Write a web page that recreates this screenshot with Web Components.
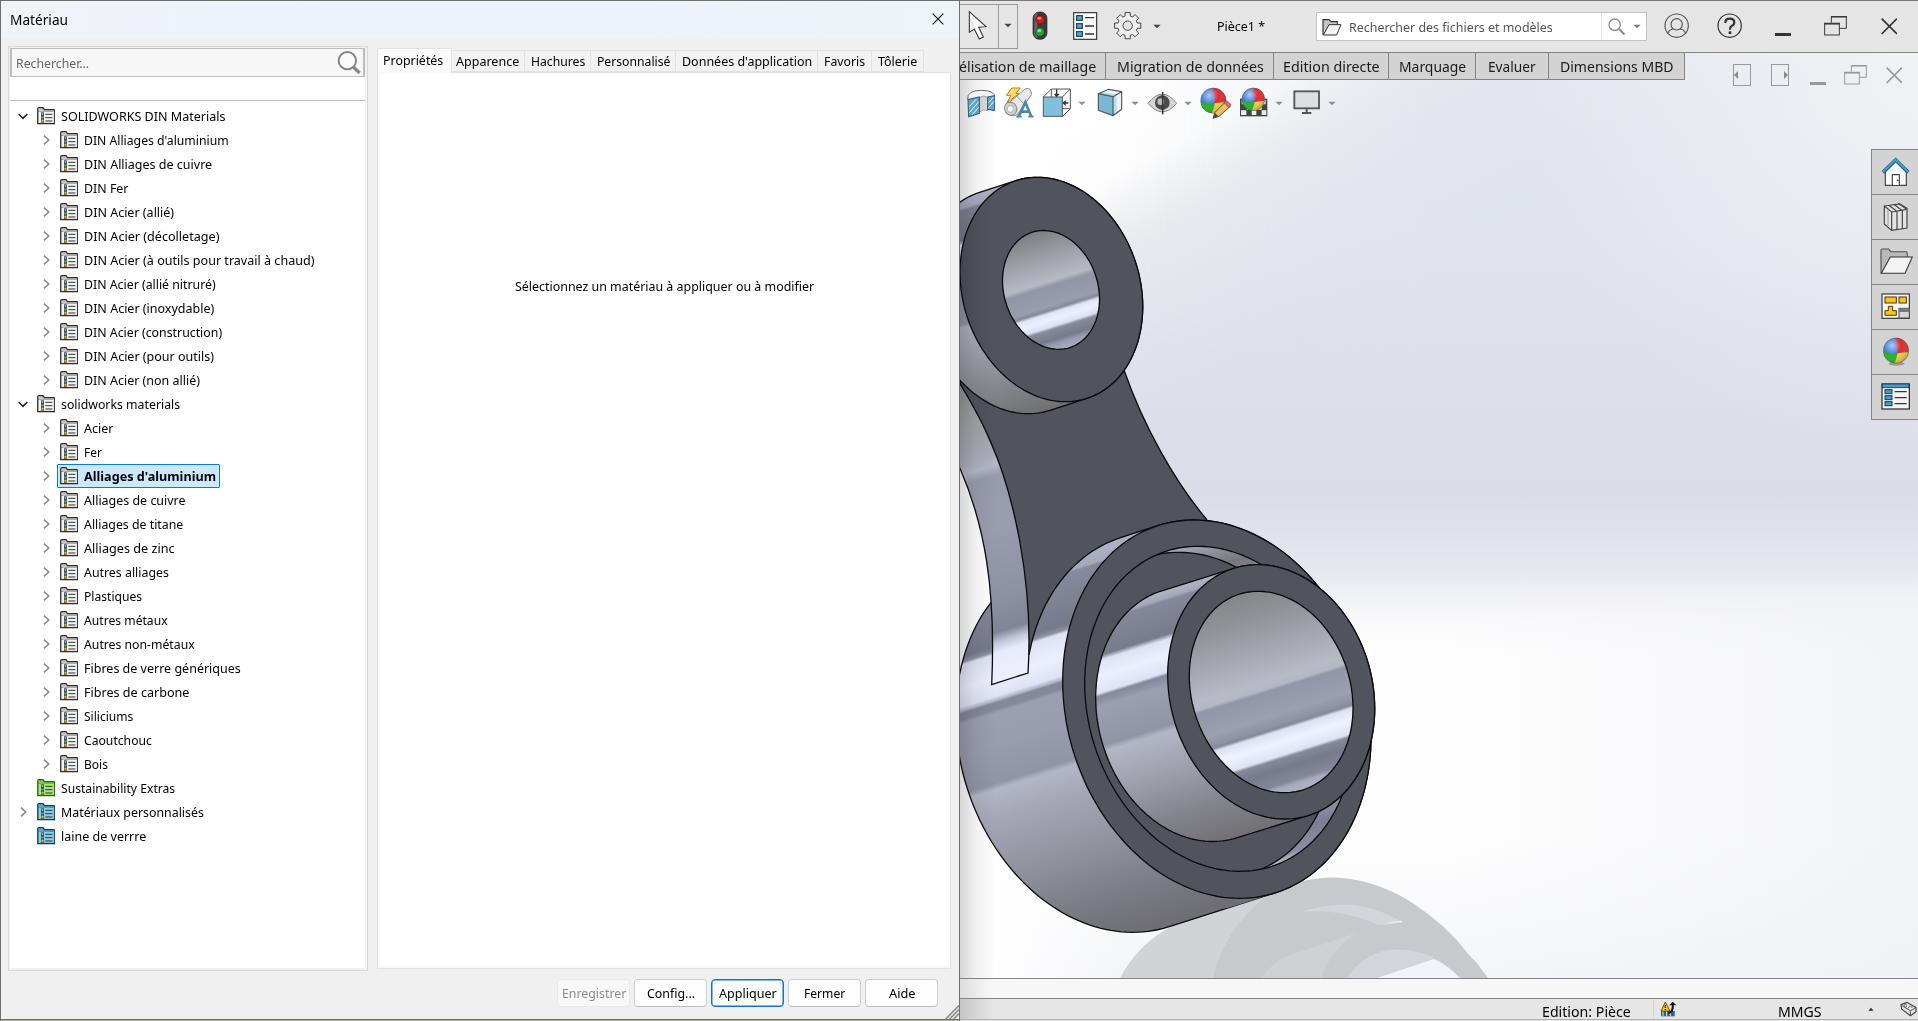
<!DOCTYPE html>
<html lang="fr">
<head>
<meta charset="utf-8">
<title>Matériau</title>
<style>
html,body{margin:0;padding:0}
body{width:1918px;height:1021px;overflow:hidden;font-family:"Noto Sans","Open Sans",sans-serif;font-size:12.5px;color:#000;background:#e5e5e5}
.desk{display:flex;width:1918px;height:1021px}
</style>
</head>
<body>
<div class="desk">
<material-dialog></material-dialog>
<cad-window></cad-window>
</div>
<script>
const NX = .3, NY = .954;

/* ---------- icons: drawn on a grid of three units per pixel ---------- */
const sphere = (cx, cy, r) => `
 <clipPath id="sc"><circle cx="${cx}" cy="${cy}" r="${r}"/></clipPath>
 <radialGradient id="sh" cx=".35" cy=".3" r=".8"><stop offset="0" stop-color="#fff" stop-opacity=".6"/><stop offset=".45" stop-color="#fff" stop-opacity="0"/><stop offset="1" stop-color="#000" stop-opacity=".3"/></radialGradient>
 <g clip-path="url(#sc)"><rect x="${cx-r}" y="${cy-r}" width="${2*r}" height="${2*r}" fill="#3f78d8"/>
 <path d="M${cx-3} ${cy-r}Q${cx+6} ${cy-r/2} ${cx+4} ${cy+8}L${cx+r} ${cy+4}V${cy-r}Z" fill="#e02a2e"/>
 <path d="M${cx-r} ${cy+3}Q${cx-10} ${cy+12} ${cx+4} ${cy+8}Q${cx+3} ${cy+r-10} ${cx-5} ${cy+r}H${cx-r}Z" fill="#1fb51f"/>
 <path d="M${cx+4} ${cy+8}L${cx+r} ${cy+4}V${cy+r}H${cx-5}Q${cx+4} ${cy+r/2} ${cx+4} ${cy+8}Z" fill="#f0cf45"/></g>
 <circle cx="${cx}" cy="${cy}" r="${r}" fill="url(#sh)" stroke="#555" stroke-width="1.5"/>`;
const folder = (a, b, line) => `<path d="M2 50V6Q2 2 6 2H18L22 8H50Q53 8 53 12V50Z" fill="${a}" stroke="${line}" stroke-width="3.4"/>
 <rect x="6" y="13" width="44" height="34" fill="${b}"/><path d="M2 14H50" stroke="${line}" stroke-width="2" opacity=".55"/>
 <rect x="12" y="16" width="9" height="31" fill="#444"/><circle cx="16.5" cy="21" r="2.6" fill="#ddd"/><circle cx="16.5" cy="31" r="3.6" fill="#39a8e0"/><circle cx="16.5" cy="41" r="3.6" fill="#f0b429"/>
 <path d="M25 22H46M25 32H46M25 42H46" stroke="#333" stroke-width="3"/>`;
const restore = (x, y, c) => `<g fill="none" stroke="${c}" stroke-width="3"><path d="M${x+22} ${y+20}V${y+2}H${x+67}V${y+37}H${x+47}"/><rect x="${x+2}" y="${y+23}" width="44" height="34"/></g><path d="M${x} ${y+23}H${x+48}M${x+21} ${y+2}H${x+69}" stroke="${c}" stroke-width="5"/>`;
const gear = (() => { let d = '';
  for (let i = 0; i < 8; i++) for (const [o, r] of [[-.26,30],[-.2,40],[.2,40],[.26,30]]) {
    const a = i*Math.PI/4 + o; d += (d?'L':'M') + (534+r*Math.cos(a)).toFixed(1)+' '+(78+r*Math.sin(a)).toFixed(1); }
  return d + 'Z'; })();
const ICONS = {
 down: ['0 0 42 30', '<path d="M8 9L21 22L34 9" fill="none" stroke="#1c1c1c" stroke-width="4.5"/>'],
 right:['0 0 42 36', '<path d="M15 5L29 18L15 31" fill="none" stroke="#848484" stroke-width="4.5"/>'],
 none: ['0 0 42 30', ''],
 gray: ['0 0 55 52', folder('#c9c9c9','#f2f2f2','#2b2b2b')],
 green:['0 0 55 52', folder('#7ec850','#a2ec6c','#1f6a10')],
 blue: ['0 0 55 52', folder('#5aa9d0','#86cdea','#0f3d5c')],
 find: ['1012 152 72 70','<circle cx="1043" cy="181" r="26" fill="#fafafa" stroke="#858585" stroke-width="6"/><path d="M1061 200L1080 218" stroke="#858585" stroke-width="10"/>'],
 dlgx: ['0 0 42 42','<path d="M5 5L37 37M37 5L5 37" stroke="#111" stroke-width="3.4"/>'],
 cursor:['54 30 60 92','<path d="M58 35L58 97L73 87L88 117L100 111L86 82L108 80Z" fill="#fff" stroke="#333" stroke-width="3.2"/><path d="M61 42V92L73 82Z" fill="#e8e8e8"/>'],
 arrow:['0 0 24 15','<path d="M1 2H23L12 13Z" fill="#444"/>'],
 arrowm:['0 0 24 15','<path d="M1 2H23L12 13Z" fill="#7c7c7c"/>'],
 arrowg:['0 0 24 15','<path d="M1 2H23L12 13Z" fill="#8c8e93"/>'],
 light:['246 34 48 88','<rect x="249" y="37" width="42" height="82" rx="19" fill="#3a3a3a" stroke="#222" stroke-width="2"/><path d="M253 52Q253 41 262 40V116Q253 112 253 104Z" fill="#666"/><circle cx="270" cy="60" r="13" fill="#d01c14" stroke="#5a1010" stroke-width="2"/><circle cx="270" cy="97" r="13" fill="#2f9e3c" stroke="#104a18" stroke-width="2"/><ellipse cx="268" cy="56" rx="6" ry="4" fill="#ff8a78"/><ellipse cx="268" cy="93" rx="6" ry="4" fill="#8fe394"/>'],
 list: ['369 36 74 85','<rect x="371" y="38" width="69" height="80" fill="#fff" stroke="#333" stroke-width="3.5"/><g fill="#5aa9cf" stroke="#123f5c" stroke-width="3.5"><rect x="380" y="47" width="17" height="14"/><rect x="380" y="71" width="17" height="14"/><rect x="380" y="95" width="17" height="14"/></g><path d="M405 53H432M405 78H432M405 102H432" stroke="#333" stroke-width="4"/>'],
 gear: ['490 34 88 88',`<path d="${gear}" fill="#efefef" stroke="#444" stroke-width="3" stroke-linejoin="round"/><circle cx="534" cy="78" r="14" fill="#e5e5e5" stroke="#444" stroke-width="3"/>`],
 open: ['1117 52 60 54','<path d="M1120 103V57H1138L1144 63H1163V73" fill="#c4c4c4" stroke="#333" stroke-width="3.5"/><path d="M1121 103L1138 72H1174L1161 103Z" fill="#f4f4f4" stroke="#333" stroke-width="3"/>'],
 zoom: ['506 56 52 52','<circle cx="526" cy="76" r="17" fill="none" stroke="#8a8a8a" stroke-width="4"/><path d="M539 89L555 105" stroke="#8a8a8a" stroke-width="6"/>'],
 user: ['673 40 76 76','<circle cx="711" cy="78" r="35" fill="none" stroke="#555" stroke-width="3.4"/><circle cx="711" cy="74" r="17" fill="none" stroke="#555" stroke-width="3.4"/><path d="M684 101Q690 88 701 88M738 101Q732 88 721 88" fill="none" stroke="#555" stroke-width="3.4"/>'],
 help: ['832 40 76 76','<circle cx="870" cy="78" r="35" fill="none" stroke="#333" stroke-width="3.6"/><path d="M857 70Q857 57 870 57Q884 57 884 68Q884 76 875 80Q871 82 871 90" fill="none" stroke="#333" stroke-width="6.5"/><rect x="867" y="95" width="8" height="8" fill="#333"/>'],
 min:  ['0 0 48 9','<rect width="48" height="9" fill="#333"/>'],
 ming: ['0 0 48 9','<rect width="48" height="9" fill="#98999c"/>'],
 rest: ['0 0 70 60', restore(0,0,'#3a3a3a')],
 restg:['0 0 70 60', restore(0,0,'#98999c')],
 close:['0 0 50 50','<path d="M2 2L48 48M48 2L2 48" stroke="#333" stroke-width="5"/>'],
 closeg:['0 0 50 50','<path d="M2 2L48 48M48 2L2 48" stroke="#98999c" stroke-width="5"/>'],
 pleft:['0 0 54 66','<rect x="1.5" y="1.5" width="51" height="63" fill="none" stroke="#98999c" stroke-width="3"/><path d="M15 21V45L3 33Z" fill="#88898c"/>'],
 pright:['0 0 54 66','<rect x="1.5" y="1.5" width="51" height="63" fill="none" stroke="#98999c" stroke-width="3"/><path d="M39 21V45L51 33Z" fill="#88898c"/>'],
 section:['50 264 86 90','<path d="M52 297Q50 271 93 271Q136 271 134 295L112 303Q104 306 88 303L55 300Z" fill="#f2f2f2" stroke="#666" stroke-width="3"/><path d="M88 292Q100 284 112 292V332Q98 326 88 336Z" fill="#d2d2d2" stroke="#888" stroke-width="2"/><path d="M53 299L87 291V340L55 350ZM112 291L133 287V332L112 328Z" fill="#5fa8c9" stroke="#3a5f78" stroke-width="3.4"/><path d="M57 320L78 297M57 338L85 306M66 344L85 322M115 308L130 291M115 323L131 304" stroke="#e6f4fa" stroke-width="3"/>'],
 annot:['160 262 94 94','<path d="M168 318L226 268Q240 262 244 276L246 284L202 346Q180 352 168 338Z" fill="#e9e9e9" stroke="#888" stroke-width="3"/><path d="M202 290L222 312" stroke="#999" stroke-width="3"/><ellipse cx="183" cy="327" rx="18" ry="20" fill="#d0d0d0" stroke="#888" stroke-width="3" transform="rotate(-30 183 327)"/><ellipse cx="182" cy="328" rx="9" ry="10" fill="#fff" stroke="#999" stroke-width="2"/><path d="M187 265H212L198 281H209L172 309L184 287H170Z" fill="#ffe16a" stroke="#c9772a" stroke-width="3"/><path d="M207 351L227 308L245 351M214 336H238" fill="none" stroke="#4a87a8" stroke-width="8"/><path d="M200 351H216M236 351H252" stroke="#4a87a8" stroke-width="5"/>'],
 orient:['277 264 88 90','<g fill="none" stroke="#555" stroke-width="3"><path d="M281 291L305 267H362V326L338 350M338 291L362 267M305 267V290M338 326H362"/></g><rect x="281" y="291" width="57" height="58" fill="#7fc0dc" stroke="#555" stroke-width="3"/><path d="M321 268V284M356 309H345" stroke="#333" stroke-width="4"/><path d="M312 281H330L321 292ZM348 300V318L338 309Z" fill="#333"/>'],
 cube: ['441 264 78 86','<path d="M445 281L476 268L515 275L489 290Z" fill="#f2f8fb"/><path d="M445 281L489 290V347L445 331Z" fill="#79b9d6"/><path d="M489 290L515 275V328L489 347Z" fill="#eef2f4"/><path d="M462 276L500 283V341L489 347V290L445 281Z" fill="#a9d8ea" opacity=".8"/><path d="M445 281L476 268L515 275V328L489 347L445 331ZM445 281L489 290L515 275M489 290V347" fill="none" stroke="#555" stroke-width="3.5" stroke-linejoin="round"/>'],
 eye:  ['592 272 92 72','<path d="M595 309Q638 254 681 309Q638 360 595 309Z" fill="#d4d4d4" stroke="#888" stroke-width="3"/><circle cx="638" cy="307" r="22" fill="#4a4a4c"/><circle cx="633" cy="304" r="10" fill="#bfc0c2"/><path d="M639 275V342" stroke="#333" stroke-width="4.5"/>'],
 paint:['751 262 94 96', sphere(791,303,38)+'<path d="M790 356L796 338L828 306L842 320L808 350Z" fill="#f0c060" stroke="#6a4a2a" stroke-width="3"/><path d="M824 310L832 303L844 315L837 324Z" fill="#e06a6a" stroke="#555" stroke-width="2"/><path d="M790 356L796 340L806 350Z" fill="#444"/>'],
 scene:['868 262 88 90','<path d="M871 297H953V350H871Z" fill="#444"/><path d="M876 301H892V314H876ZM930 301H948V314H930ZM892 316H908V330H892ZM918 318H936V330H918ZM874 332H890V346H874ZM906 332H920V346H906ZM936 332H950V346H936Z" fill="#eee"/>'+sphere(911,299,34)],
 mon:  ['1030 271 82 72','<rect x="1034" y="275" width="74" height="51" fill="#dcdee2" stroke="#555" stroke-width="5.5"/><path d="M1071 328V338M1057 340H1085" stroke="#555" stroke-width="6"/>'],
 home: ['130 48 88 90','<path d="M143 90V133H206V90L174 60Z" fill="#fafafa" stroke="#444" stroke-width="3.5"/><path d="M164 132V101H185V132" fill="#fff" stroke="#444" stroke-width="3.5"/><circle cx="180" cy="118" r="2.5" fill="#444"/><path d="M136 94L174 57L212 94" fill="none" stroke="#1c5a80" stroke-width="11"/><path d="M136 93L174 56L212 93" fill="none" stroke="#4a9cc8" stroke-width="6"/>'],
 lib:  ['135 184 76 88','<path d="M139 196L186 190L207 203V262L161 269L139 250Z" fill="#e4e4e4" stroke="#444" stroke-width="3.5"/><path d="M139 196L161 214L207 206M161 214V269M177 211V266M193 208V264M152 194L175 210M167 190L190 208M180 188L204 204" fill="none" stroke="#444" stroke-width="3.5"/><path d="M150 206V257" stroke="#999" stroke-width="3"/>'],
 fold: ['124 325 100 80','<path d="M127 401V331Q127 328 131 328H150L156 336H204Q206 337 206 352" fill="#b9b9b9" stroke="#4c4c4c" stroke-width="3.2"/><path d="M128 401L155 352H221L199 401Z" fill="#f4f4f4" stroke="#333" stroke-width="3.2"/>'],
 pal:  ['130 460 88 80','<rect x="133" y="463" width="82" height="73" fill="#f7f7f7" stroke="#333" stroke-width="3.5"/><g fill="#fcc419" stroke="#4a3500" stroke-width="3"><rect x="142" y="472" width="34" height="18"/><rect x="184" y="472" width="22" height="18"/><path d="M142 527V513H152V500H165V513H176V527Z"/></g><rect x="184" y="506" width="31" height="29" fill="#d6d6d6" stroke="#444" stroke-width="3"/><rect x="184" y="506" width="31" height="11" fill="#777"/>'],
 ball: ['132 588 84 88','<ellipse cx="176" cy="668" rx="24" ry="6" fill="#999"/>'+sphere(174,629,38)],
 prop: ['130 728 88 82','<rect x="133" y="731" width="82" height="75" fill="#f4f4f4" stroke="#222" stroke-width="3.5"/><rect x="134" y="731" width="80" height="11" fill="#4a9cc4" stroke="#123a54" stroke-width="2.5"/><g fill="#4a9cc4" stroke="#123a54" stroke-width="3"><rect x="142" y="748" width="21" height="12"/><rect x="142" y="766" width="21" height="12"/><rect x="142" y="784" width="21" height="12"/></g><path d="M171 754H207M171 772H207M171 790H207" stroke="#333" stroke-width="3.5"/>'],
 warn: ['627 126 51 48','<path d="M630 156H671V172H630Z" fill="#2d6284"/><path d="M636 156V172M647 156V172M658 156V172" stroke="#dfe8ee" stroke-width="3"/><path d="M630 156L643 129L657 156Z" fill="#ffc61a" stroke="#7a4a00" stroke-width="3"/><path d="M643 138V147M643 150V153" stroke="#222" stroke-width="3.5"/><path d="M652 162Q668 158 665 136" fill="none" stroke="#111" stroke-width="6"/><path d="M655 139L665 128L676 139Z" fill="#111"/>'],
 up:   ['0 0 18 12','<path d="M1 11H17L9 2Z" fill="#333"/>'],
 tag:  ['1351 126 52 48','<path d="M1354 137L1372 130L1399 146V158L1382 170L1356 150Z" fill="#e8e8e8" stroke="#444" stroke-width="3.5"/><path d="M1355 139L1382 155L1398 147M1382 155V168" fill="none" stroke="#555" stroke-width="3"/><circle cx="1367" cy="140" r="4" fill="none" stroke="#555" stroke-width="2.5"/><path d="M1374 148L1382 141L1388 147" fill="none" stroke="#555" stroke-width="2.5"/>'],
 grip: ['0 0 42 42','<path d="M2 42L42 2M14 42L42 14M26 42L42 26" stroke="#8f8f8f" stroke-width="5"/>']
};

class SwIcon extends HTMLElement {
  constructor(){ super(); this.attachShadow({mode:'open'}); }
  connectedCallback(){
    const [vb, body] = ICONS[this.getAttribute('name')];
    const [, , w, h] = vb.split(' ').map(Number);
    this.shadowRoot.innerHTML = `<style>:host{display:block;flex:none;width:${w/3}px;height:${h/3}px}svg{display:block;width:100%;height:100%}</style><svg viewBox="${vb}">${body}</svg>`;
  }
}
customElements.define('sw-icon', SwIcon);

/* Text set to a fixed advance width, so that the labels keep their measure. */
class FitText extends HTMLElement {
  constructor(){ super(); this.attachShadow({mode:'open'});
    this.shadowRoot.innerHTML = `<style>:host{display:block;flex:none;white-space:pre}span{display:inline-block;transform-origin:0 50%}</style><span><slot></slot></span>`; }
  connectedCallback(){
    const w = +this.getAttribute('w'), s = this.shadowRoot.querySelector('span');
    this.style.width = w + 'px';
    s.style.transform = `scaleX(${((w + .6) / s.offsetWidth).toFixed(4)})`;
  }
}
customElements.define('fit-text', FitText);

/* ---------- material tree ---------- */
class TreeRow extends HTMLElement {
  constructor(){ super(); this.attachShadow({mode:'open'}); }
  connectedCallback(){
    const a = n => this.getAttribute(n);
    this.shadowRoot.innerHTML = `<style>
:host{display:flex;flex:none;align-items:center;height:24px;padding-left:${a('level')==='1'?29:6}px}
.l{display:flex;align-items:center;gap:6px;height:22px;margin-left:4px;padding:0 4px 0 2px;border:1px solid transparent;border-radius:1px}
.l.sel{background:#cce8ff;border-color:#0a7ad6;font-weight:700}
</style><sw-icon name="${a('mark')}"></sw-icon><div class="l ${this.hasAttribute('selected')?'sel':''}"><sw-icon name="${a('kind')}"></sw-icon><fit-text w="${a('w')}"></fit-text></div>`;
    const f = this.shadowRoot.querySelector('fit-text'); f.textContent = this.dataset.label; f.connectedCallback();
  }
}
customElements.define('tree-row', TreeRow);
const TREE = [
 [0,'down','gray',164,'SOLIDWORKS DIN Materials'],
 [1,0,0,144,"DIN Alliages d'aluminium"],[1,0,0,127.5,'DIN Alliages de cuivre'],[1,0,0,44,'DIN Fer'],[1,0,0,89.5,'DIN Acier (allié)'],[1,0,0,134.5,'DIN Acier (décolletage)'],[1,0,0,229.5,'DIN Acier (à outils pour travail à chaud)'],[1,0,0,131.5,'DIN Acier (allié nitruré)'],[1,0,0,129.5,'DIN Acier (inoxydable)'],[1,0,0,137.5,'DIN Acier (construction)'],[1,0,0,129.5,'DIN Acier (pour outils)'],[1,0,0,115,'DIN Acier (non allié)'],
 [0,'down','gray',118.5,'solidworks materials'],
 [1,0,0,28.5,'Acier'],[1,0,0,17.5,'Fer'],[1,0,0,131,"Alliages d'aluminium",1],[1,0,0,101,'Alliages de cuivre'],[1,0,0,99,'Alliages de titane'],[1,0,0,89.5,'Alliages de zinc'],[1,0,0,84.5,'Autres alliages'],[1,0,0,57.5,'Plastiques'],[1,0,0,83,'Autres métaux'],[1,0,0,110,'Autres non-métaux'],[1,0,0,156.5,'Fibres de verre génériques'],[1,0,0,105,'Fibres de carbone'],[1,0,0,48.5,'Siliciums'],[1,0,0,67.5,'Caoutchouc'],[1,0,0,23.5,'Bois'],
 [0,'none','green',114,'Sustainability Extras'],[0,'right','blue',142,'Matériaux personnalisés'],[0,'none','blue',84.5,'laine de verrre']
];
class MaterialTree extends HTMLElement {
  constructor(){ super(); this.attachShadow({mode:'open'}); }
  connectedCallback(){
    this.shadowRoot.innerHTML = `<style>
:host{display:flex;flex-direction:column;box-sizing:border-box;width:360px;height:925px;border:1px solid #d9d9d9;padding:1px 2px 2px 1px;background:#f0f0f0}
.in{flex:1;background:#fff;display:flex;flex-direction:column}
.s{display:flex;flex:none;align-items:center;justify-content:space-between;box-sizing:border-box;height:29px;border:1px solid #bdbdbd;border-width:1px 2px 1px 2px;background:#f7f7f7;color:#666;padding:0 2px 0 4px}
.s fit-text{margin-top:2px}
.r{flex:none;height:23px;border-bottom:1px solid #bdbdbd;margin-bottom:3px}
</style><div class="in"><div class="s"><fit-text w="73">Rechercher...</fit-text><sw-icon name="find"></sw-icon></div><div class="r"></div>${
 TREE.map(([l,m,k,w,t,s])=>`<tree-row level="${l}" mark="${m||'right'}" kind="${k||'gray'}" w="${w}" ${s?'selected':''} data-label="${t}"></tree-row>`).join('')}</div>`;
  }
}
customElements.define('material-tree', MaterialTree);

class PropertyTabs extends HTMLElement {
  constructor(){ super(); this.attachShadow({mode:'open'}); }
  connectedCallback(){
    const T = [['Propriétés',75,60,6],['Apparence',73,62.5,4],['Hachures',66,54,6],['Personnalisé',85,72.5,6],["Données d'application",142,129.2,6],['Favoris',54,40.7,6],['Tôlerie',52,38.3,6]];
    this.shadowRoot.innerHTML = `<style>
:host{display:flex;flex-direction:column;width:574px;height:921px}
.t{display:flex;align-items:flex-end;height:24px;position:relative;z-index:1}
.t div{box-sizing:border-box;height:22px;display:flex;align-items:center;border:1px solid #e2e2e2;border-left:0;background:#f2f2f2;padding-top:1px}
.t div.on{height:25px;border-left:1px solid #e2e2e2;border-bottom:0;background:#fafafa;margin-bottom:-1px;padding:0 0 2px}
.p{flex:1;box-sizing:border-box;border:1px solid #e2e2e2;background:#fff;box-shadow:inset 2px 0 #f9f9f9,inset 0 -2px #f9f9f9,inset 0 1px #f9f9f9;display:flex;flex-direction:column;align-items:center;padding-top:205px}
</style><div class="t">${T.map((t,i)=>`<div class="${i?'':'on'}" style="width:${t[1]}px;padding-left:${t[3]-(i?0:1)}px"><fit-text w="${t[2]}">${t[0]}</fit-text></div>`).join('')}</div>
<div class="p"><fit-text w="298.5">Sélectionnez un matériau à appliquer ou à modifier</fit-text></div>`;
  }
}
customElements.define('property-tabs', PropertyTabs);

class DialogButton extends HTMLElement {
  constructor(){ super(); this.attachShadow({mode:'open'});
    this.shadowRoot.innerHTML = `<style>
:host{display:flex;align-items:center;justify-content:center;box-sizing:border-box;width:73px;height:28px;border:1px solid #cfcfcf;border-bottom-color:#bdbdbd;border-radius:4px;background:#fdfdfd}
:host([off]){color:#8c8c8c;background:#f8f8f8;border-color:#e9e9e9}
:host([primary]){border-color:#0b74cf;box-shadow:inset 0 0 0 .5px #0b74cf}
</style><slot></slot>`; }
}
customElements.define('dialog-button', DialogButton);

class MaterialDialog extends HTMLElement {
  constructor(){ super(); this.attachShadow({mode:'open'}); }
  connectedCallback(){
    this.shadowRoot.innerHTML = `<style>
:host{display:flex;flex-direction:column;box-sizing:border-box;width:960px;height:1021px;border:1px solid #6f6f6f;border-bottom:0;background:#f0f0f0;flex:none}
header,.m,footer,.g,.e,.k{flex:none}
header{display:flex;align-items:center;justify-content:space-between;height:37px;padding:0 14px 2px 9px;box-sizing:border-box;background:linear-gradient(90deg,#eff4f8,#eef2fb 35%,#eef2fb 65%,#ecf5f7);font-size:14.6px}
header sw-icon{margin-top:1px}
.m{display:flex;gap:9px;padding:8px 0 0 7px;height:925px}
property-tabs{margin-top:2px}
footer{display:flex;gap:4px;padding:8px 0 0 556px;height:28px}
.g{display:flex;justify-content:flex-end;align-items:flex-end;height:12px}
.g sw-icon{margin-top:-4px}
.e{height:1px;background:#6f6f6f}.k{height:1px;background:#a9b38c}
</style><header><fit-text w="57.5">Matériau</fit-text><sw-icon name="dlgx"></sw-icon></header>
<div class="m"><material-tree></material-tree><property-tabs></property-tabs></div>
<footer><dialog-button off><fit-text w="63.5">Enregistrer</fit-text></dialog-button><dialog-button><fit-text w="47">Config...</fit-text></dialog-button><dialog-button primary><fit-text w="56.7">Appliquer</fit-text></dialog-button><dialog-button><fit-text w="41">Fermer</fit-text></dialog-button><dialog-button><fit-text w="26">Aide</fit-text></dialog-button></footer>
<div class="g"><sw-icon name="grip"></sw-icon></div><div class="e"></div><div class="k"></div>`;
  }
}
customElements.define('material-dialog', MaterialDialog);

/* ---------- 3D part ---------- */
/* Tilted ellipse from its bounding box and the abscissas of its top and bottom points. */
function ell(l, r, t, b, xt, xb){
  const hw=(r-l)/2, hh=(b-t)/2, sxx=hw*hw, syy=hh*hh, sxy=(xb-xt)/2*hh;
  const m=(sxx+syy)/2, q=Math.hypot((sxx-syy)/2, sxy);
  return {cx:(l+r)/2, cy:(t+b)/2, a:Math.sqrt(m+q), b:Math.sqrt(m-q), th:.5*Math.atan2(2*sxy, sxx-syy)};
}
const pt = (e,t,dx=0,dy=0) => [e.cx+dx+e.a*Math.cos(t)*Math.cos(e.th)-e.b*Math.sin(t)*Math.sin(e.th), e.cy+dy+e.a*Math.cos(t)*Math.sin(e.th)+e.b*Math.sin(t)*Math.cos(e.th)];
function poly(ps){ return 'M'+ps.map(p=>p[0].toFixed(1)+' '+p[1].toFixed(1)).join('L')+'Z'; }
function ring(e,dx,dy){ const a=[]; for(let i=0;i<180;i++) a.push(pt(e,i*Math.PI/90,dx,dy)); return poly(a); }
/* Outline of an ellipse swept along (dx,dy). */
function sweep(e,dx,dy){
  const du=dx*Math.cos(e.th)+dy*Math.sin(e.th), dv=-dx*Math.sin(e.th)+dy*Math.cos(e.th);
  const t0=Math.atan2(-du*e.b, dv*e.a);
  const mid=pt(e,t0+Math.PI/2), s=((mid[0]-e.cx)*dx+(mid[1]-e.cy)*dy)>0?1:-1, a=[];
  for(let i=0;i<=90;i++) a.push(pt(e,t0+s*i*Math.PI/90,dx,dy));
  for(let i=90;i<=180;i++) a.push(pt(e,t0+s*i*Math.PI/90));
  return poly(a);
}
function grad(id, stops){
  const s0=stops[0][0], s1=stops[stops.length-1][0];
  return `<linearGradient id="${id}" gradientUnits="userSpaceOnUse" x1="${s0*NX}" y1="${s0*NY}" x2="${s1*NX}" y2="${s1*NY}">${stops.map(([s,c])=>`<stop offset="${((s-s0)/(s1-s0)).toFixed(4)}" stop-color="${c}"/>`).join('')}</linearGradient>`;
}
class PartView extends HTMLElement {
  constructor(){ super(); this.attachShadow({mode:'open'}); }
  connectedCallback(){
    const boss=ell(960,1142.7,177.3,401.7,1037,1065), hole=ell(1002.5,1099.5,230.5,349.3,1044.3,1059.3);
    const big=ell(1062.7,1371,520,898.3,1196.5,1242), groove=ell(1084.7,1353,546.3,871.3,1198,1240);
    const tube=ell(1167.7,1374.7,564.7,819,1258,1285), bore=ell(1189.3,1353,591.3,792.7,1258,1284);
    const D='#51535d', K='stroke="#0a0a0c" stroke-width="1.3"';
    this.shadowRoot.innerHTML = `<style>:host{display:block}svg{display:block;width:958px;height:925px}</style>
<svg viewBox="960 53 958 925"><defs>
<linearGradient id="bg" gradientUnits="userSpaceOnUse" x1="0" y1="53" x2="0" y2="978"><stop offset="0" stop-color="#e3e7ee"/><stop offset=".1" stop-color="#e0e4ec"/><stop offset=".36" stop-color="#dddfea"/><stop offset=".48" stop-color="#dadde7"/><stop offset=".56" stop-color="#e7e8ef"/><stop offset=".61" stop-color="#f9f9fb"/><stop offset=".65" stop-color="#fefefe"/><stop offset=".85" stop-color="#fefefe"/><stop offset="1" stop-color="#f4f5f9"/></linearGradient>
<linearGradient id="wh" gradientUnits="userSpaceOnUse" x1="1080" y1="110" x2="1215" y2="370"><stop offset="0" stop-color="#fff"/><stop offset=".25" stop-color="#fdfdfd"/><stop offset=".5" stop-color="#f0f0f1" stop-opacity=".55"/><stop offset="1" stop-color="#eee" stop-opacity="0"/></linearGradient>
<linearGradient id="tp" gradientUnits="userSpaceOnUse" x1="1120" y1="0" x2="1420" y2="0"><stop offset="0" stop-color="#e2e6ed" stop-opacity="0"/><stop offset="1" stop-color="#e1e5ed" stop-opacity=".85"/></linearGradient>
<linearGradient id="tf" gradientUnits="userSpaceOnUse" x1="0" y1="53" x2="0" y2="353"><stop offset="0" stop-color="#fff"/><stop offset=".6" stop-color="#fff"/><stop offset="1" stop-color="#000"/></linearGradient>
<mask id="tm" maskUnits="userSpaceOnUse" x="1120" y="53" width="798" height="300"><rect x="1120" y="53" width="798" height="300" fill="url(#tf)"/></mask>
<linearGradient id="wl" gradientUnits="userSpaceOnUse" x1="990" y1="0" x2="1120" y2="0"><stop offset="0" stop-color="#fff"/><stop offset="1" stop-color="#fff" stop-opacity="0"/></linearGradient>
<radialGradient id="rt" gradientUnits="userSpaceOnUse" cx="1918" cy="60" r="400"><stop offset="0" stop-color="#f3f4f7" stop-opacity=".9"/><stop offset="1" stop-color="#f3f4f7" stop-opacity="0"/></radialGradient>
<linearGradient id="rb" gradientUnits="userSpaceOnUse" x1="1450" y1="0" x2="1918" y2="0"><stop offset="0" stop-color="#f0f1f6" stop-opacity="0"/><stop offset="1" stop-color="#f0f1f6" stop-opacity=".8"/></linearGradient>
<linearGradient id="sd" gradientUnits="userSpaceOnUse" x1="960" y1="0" x2="996" y2="0"><stop offset="0" stop-color="#000" stop-opacity=".16"/><stop offset=".4" stop-color="#000" stop-opacity=".06"/><stop offset="1" stop-color="#000" stop-opacity="0"/></linearGradient>
${grad('gBig',[[840,'#b7bbce'],[865,'#a4a8ba'],[867,'#878a9c'],[915,'#777a8b'],[920,'#8d90a2'],[923,'#dfe2f2'],[945,'#eceffe'],[963,'#dfe2f4'],[967,'#b0b3c5'],[969,'#85889a'],[975,'#85889a'],[979,'#9c9fb1'],[1010,'#999cae'],[1046,'#9194a5'],[1052,'#b3b6c6'],[1080,'#a5a7b6'],[1130,'#92949f'],[1190,'#7a7c84'],[1228,'#6f6e74']])}
${grad('gTube',[[908,'#b7bbce'],[920,'#a4a8ba'],[923,'#85889a'],[955,'#787b8c'],[960,'#dfe2f2'],[975,'#eceffe'],[991,'#dfe2f4'],[994,'#85889a'],[999,'#8f92a4'],[1004,'#9c9fb1'],[1042,'#9194a5'],[1048,'#b3b6c4'],[1080,'#a2a4b0'],[1130,'#84858c'],[1168,'#727176']])}
${grad('gBore',[[941,'#86878b'],[965,'#919297'],[1030,'#b8bac6'],[1037,'#b4b7c4'],[1040,'#9396a8'],[1065,'#9c9fb0'],[1075,'#8e91a2'],[1078,'#85889a'],[1081,'#dde0f0'],[1092,'#eff2ff'],[1105,'#dfe2f2'],[1108,'#868999'],[1118,'#777a8a'],[1132,'#84879a'],[1136,'#a6aabd'],[1148,'#b5b9cc']])}
${grad('gHole',[[533,'#7f8083'],[555,'#9a9ba1'],[583,'#b7b9c6'],[588,'#9295a6'],[607,'#9a9dae'],[611,'#85889a'],[614,'#e0e3f3'],[620,'#eceffe'],[627,'#dde0f0'],[630,'#878a9b'],[640,'#777a8a'],[645,'#9a9db0'],[655,'#b0b4c6']])}
${grad('gBoss',[[470,'#b7bbce'],[487,'#a6aabd'],[490,'#7f8294'],[518,'#777a8b'],[523,'#e4e7f5'],[545,'#e4e7f5'],[550,'#8e91a2'],[598,'#9194a5'],[602,'#b0b2be'],[640,'#999aa3'],[680,'#7f8084'],[705,'#707073']])}
${grad('gRib',[[650,'#8f9093'],[700,'#a3a4aa'],[728,'#a9abb6'],[742,'#b5b8c6'],[752,'#989bad'],[800,'#9a9db0'],[870,'#8e91a4'],[902,'#818496'],[912,'#c3c6d8'],[922,'#e8ebfa'],[960,'#eff1fd']])}
${grad('gGr',[[870,'#b0b3c4'],[905,'#77777b'],[925,'#8f9095'],[960,'#b0b2bb'],[1100,'#dfe2f2'],[1180,'#7c7f92'],[1200,'#8b8ea2'],[1206,'#b0b4c6'],[1225,'#b7bbce']])}
<clipPath id="cg"><path d="${ring(groove,0,0)}"/></clipPath>
<clipPath id="ca"><rect x="1000" y="500" width="200" height="155"/></clipPath>
</defs>
<rect x="960" y="53" width="958" height="925" fill="url(#bg)"/><rect x="960" y="53" width="958" height="560" fill="url(#wh)"/><rect x="1120" y="53" width="798" height="300" fill="url(#tp)" opacity=".7" mask="url(#tm)"/><rect x="960" y="53" width="160" height="925" fill="url(#wl)"/><rect x="1400" y="53" width="518" height="500" fill="url(#rt)"/><rect x="1450" y="600" width="468" height="378" fill="url(#rb)"/>
<g><path d="M1120 978Q1138 944 1172 926L1290 886L1330 978Z" fill="#d2d3d6"/>
<path d="M1213 978Q1224 931 1264 898Q1292 878 1335 877.5Q1372 879 1408 900Q1448 926 1468 954L1476 962L1488 978Z" fill="#c8c9cc"/>
<path d="M1301.7 911.7Q1325 904 1348 904.5Q1378 907 1402 921.7L1386 925L1378 925Q1345 909 1301.7 911.7Z" fill="#d4d5da"/><path d="M1386 922.5L1402 920.5V922.5L1390 923.5Z" fill="#e9eaee"/>
<path d="M1261.7 978Q1272 962 1290 955L1357 933Q1332 948 1321 978Z" fill="#cfd0d4"/>
<path d="M1347 978Q1362 955 1388 950Q1430 946 1460 978Z" fill="#d4d5da"/><path d="M1377 978L1434 959Q1449 966 1460 978Z" fill="#f2f3f9"/></g>
<path d="${sweep(big,-107,34)}" fill="url(#gBig)" ${K}/>
<path d="M960 384Q981 421 991 443C1005 475 1030 560 1028 673L1050 680L1180 600L1206.7 519.5C1175 482 1143 425 1124 370L1100 330L960 340Z" fill="${D}" ${K}/>
<path d="${sweep(big,-37,12)}" fill="url(#gBig)"/>
<path d="${sweep(big,-37,12)}" fill="none" clip-path="url(#ca)" ${K}/>
<path d="M959 382Q981 418 991 443C1012 490 1034 580 1028 673L991.7 684.5C996 590 985 525 959 466Z" fill="url(#gRib)" ${K}/>
<path d="${sweep(boss,-37,12)}" fill="url(#gBoss)" ${K}/>
<path d="${ring(boss,0,0)}" fill="${D}" ${K}/><path d="${ring(hole,0,0)}" fill="url(#gHole)" ${K}/>
<path d="${ring(big,0,0)}" fill="${D}" ${K}/>
<g clip-path="url(#cg)"><path d="${ring(groove,0,0)}" fill="url(#gGr)"/><path d="${ring(groove,-19,6)}" fill="${D}" ${K}/></g>
<path d="${ring(groove,0,0)}" fill="none" ${K}/>
<path d="${sweep(tube,-72,22.5)}" fill="url(#gTube)" ${K}/>
<path d="${ring(tube,0,0)}" fill="${D}" ${K}/><path d="${ring(bore,0,0)}" fill="url(#gBore)" ${K}/>
<rect x="960" y="53" width="36" height="925" fill="url(#sd)"/></svg>`;
  }
}
customElements.define('part-view', PartView);

/* ---------- application window ---------- */
/* Lays its icons out in a row; each entry is [icon, left, top] in window pixels. */
class IconStrip extends HTMLElement {
  constructor(){ super(); this.attachShadow({mode:'open'}); }
  connectedCallback(){
    let x = +this.getAttribute('x'); const y = +this.getAttribute('y');
    this.shadowRoot.innerHTML = `<style>:host{display:flex;flex:none;align-items:flex-start}</style>` + this.getAttribute('items').split(';').map(s=>{
      const [n,l,t] = s.split(','), w = ICONS[n][0].split(' ')[2]/3, m = l - x; x = +l + w;
      return `<sw-icon name="${n}" style="margin:${t-y}px 0 0 ${m.toFixed(2)}px"></sw-icon>`; }).join('');
  }
}
customElements.define('icon-strip', IconStrip);

class TitleBar extends HTMLElement {
  constructor(){ super(); this.attachShadow({mode:'open'}); }
  connectedCallback(){
    this.shadowRoot.innerHTML = `<style>
:host{display:flex;flex:none;box-sizing:border-box;height:53px;border-top:1px solid #777;border-bottom:1px solid #858585;background:#e5e5e5;align-items:flex-start}
.c{display:flex;box-sizing:border-box;height:45px;width:58px;margin-top:3px;border:1px solid #999;border-left:0}
.c div{width:38px;border-right:1px solid #999}.c sw-icon[name=cursor]{margin:5px 0 0 8px}.c sw-icon[name=arrow]{margin:18px 0 0 5px}
.t{margin:17px 0 0 13px;font-size:12.6px}
.s{display:flex;flex:none;align-items:center;box-sizing:border-box;width:331px;height:29px;margin:11px 0 0 51px;border:1px solid #c2c2c2;background:#fff;color:#555;padding-left:5px}
.s fit-text{margin:2px 0 0 7px}.d{height:27px;width:1px;background:#e3e3e3;margin:0 6px 0 48px}.s sw-icon[name=arrowm]{margin-left:8px}
</style><div class="c"><div><sw-icon name="cursor"></sw-icon></div><sw-icon name="arrow"></sw-icon></div>
<icon-strip x="1018" y="1" items="light,1032,11.3;list,1073,12;gear,1113.3,11.3;arrow,1153.5,23.5" style="width:186px"></icon-strip>
<fit-text class="t" w="48">Pièce1 *</fit-text>
<div class="s"><sw-icon name="open"></sw-icon><fit-text w="203.5">Rechercher des fichiers et modèles</fit-text><div class="d"></div><sw-icon name="zoom"></sw-icon><sw-icon name="arrowm"></sw-icon></div>
<icon-strip x="1647" y="1" items="user,1664.3,13.3;help,1717.3,13.3;min,1775,33;rest,1824,16;close,1880.7,18"></icon-strip>`;
  }
}
customElements.define('title-bar', TitleBar);

class CommandTabs extends HTMLElement {
  constructor(){ super(); this.attachShadow({mode:'open'}); }
  connectedCallback(){
    const T=[['élisation de maillage',146,136.4,-1],['Migration de données',168,146.4,11],['Edition directe',115,96.3,9.3],['Marquage',87,67,10],['Evaluer',73,47.3,12.4],['Dimensions MBD',136,112.9,11]];
    this.shadowRoot.innerHTML = `<style>:host{display:flex;height:27px}
div{box-sizing:border-box;height:27px;border-right:1px solid #858585;border-bottom:1px solid #858585;background:#d3d3d3;color:#1a1a1a;font-size:14.6px;overflow:hidden;display:flex;align-items:center}
</style>${T.map(t=>`<div style="width:${t[1]}px"><fit-text w="${t[2]}" style="margin-left:${t[3]}px">${t[0]}</fit-text></div>`).join('')}`;
  }
}
customElements.define('command-tabs', CommandTabs);

class TaskPane extends HTMLElement {
  constructor(){ super(); this.attachShadow({mode:'open'}); }
  connectedCallback(){
    this.shadowRoot.innerHTML = `<style>:host{display:flex;flex-direction:column;width:47px;border:1px solid #858585;border-right:0;box-sizing:border-box}
div{box-sizing:border-box;height:45px;border-bottom:1px solid #858585;background:#d3d3d3;display:flex;align-items:center;padding:0 0 1px 8px}
div:first-child{background:#f7f7f7;height:44px}div:last-child{border-bottom:0;height:44px}
</style>${['home','lib','fold','pal','ball','prop'].map(n=>`<div><sw-icon name="${n}" style="margin-left:${({home:1.3,lib:2.8,fold:-.5,pal:1.3,ball:2,prop:1.3})[n]}px"></sw-icon></div>`).join('')}`;
  }
}
customElements.define('task-pane', TaskPane);

class CadWindow extends HTMLElement {
  constructor(){ super(); this.attachShadow({mode:'open'}); }
  connectedCallback(){
    this.shadowRoot.innerHTML = `<style>
:host{display:flex;flex-direction:column;width:958px;height:1021px;flex:none;overflow:hidden}
.v{display:grid;height:925px;flex:none}.v>*{grid-area:1/1}
.o{display:flex;flex-direction:column}
.r1{display:flex;align-items:flex-start;height:27px}
task-pane{align-self:flex-end;margin-top:22px}
.h{height:47px}
.b{height:19px;border:1px solid #858585;border-width:1px 0;background:linear-gradient(90deg,#dcdcdc,#f7f7f7 30px)}
.st{display:flex;align-items:center;height:21px;background:linear-gradient(90deg,#c6c6c6,#e6e6e6 34px);font-size:14.4px;box-sizing:border-box;border-bottom:1px solid #b5aeae}
</style><title-bar></title-bar>
<div class="v"><part-view></part-view><div class="o"><div class="r1"><command-tabs></command-tabs><icon-strip x="1685" y="53" items="pleft,1733,64;pright,1771,64;ming,1810,82;restg,1844,65;closeg,1885.7,67"></icon-strip></div>
<icon-strip class="h" x="960" y="80" items="section,966.7,88;annot,1003.3,87.3;orient,1042.3,88;arrowg,1078.5,100.5;cube,1097,88;arrowg,1131.5,100.5;eye,1147.3,90.7;arrowg,1184.5,100.5;paint,1200.3,87.3;scene,1239.3,87.3;arrowg,1275.5,100.5;mon,1293.3,90.3;arrowg,1328.5,100.5"></icon-strip>
<task-pane></task-pane></div></div>
<div class="b"></div>
<div class="st"><fit-text w="88" style="margin:4px 0 0 582px">Edition: Pièce</fit-text><div style="width:1px;height:19px;background:#d2d2d2;margin:0 6px 0 23px"></div><sw-icon name="warn"></sw-icon><fit-text w="42.5" style="margin:4px 0 0 101px">MMGS</fit-text><sw-icon name="up" style="margin-left:47px"></sw-icon><sw-icon name="tag" style="margin-left:26px"></sw-icon></div>`;
  }
}
customElements.define('cad-window', CadWindow);
</script>
</body>
</html>
